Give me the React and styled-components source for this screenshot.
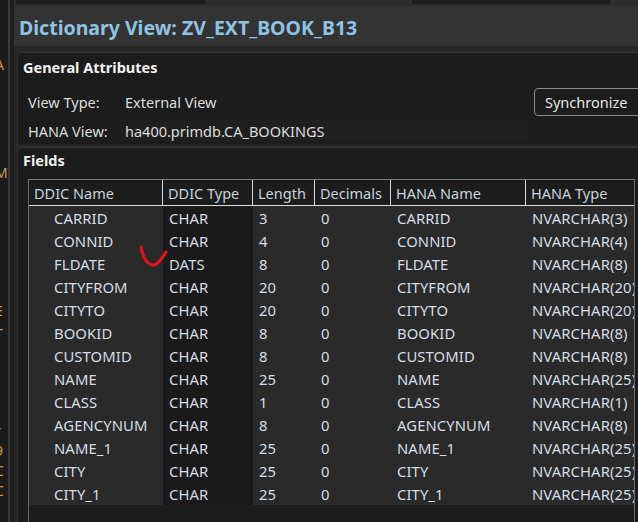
import React from 'react';
import styled, { createGlobalStyle } from 'styled-components';

const GlobalStyle = createGlobalStyle`
  html, body {
    margin: 0;
    padding: 0;
    background: #1e1e1e;
    font-family: "Noto Sans", "Open Sans", sans-serif;
  }
`;

const Page = styled.div`
  display: flex;
  width: 638px;
  height: 522px;
  overflow: hidden;
  background: #1e1e1e;
`;

const Sidebar = styled.div`
  width: 8px;
  flex: none;
  position: relative;
  overflow: hidden;
  background: #1b1b1b;
  border-right: 2px solid #3a3a3a;
  margin-right: 4px;
`;

const SideGlyph = styled.span`
  position: absolute;
  left: -5px;
  top: ${p => p.top}px;
  font-size: 14px;
  color: #c89a4a;
  line-height: 1;
`;

const Main = styled.div`
  flex: 1;
  display: flex;
  flex-direction: column;
  min-width: 0;
  background: #262626;
`;

const TopStrip = styled.div`
  height: 6px;
  display: flex;
  background: #2d2d2d;
`;

const TopTab = styled.div`
  width: ${p => p.w}px;
  margin-left: ${p => p.ml}px;
  background: #1e1e1e;
  height: 4px;
`;

const TitleBar = styled.div`
  height: 40px;
  display: flex;
  align-items: center;
  padding: 2px 0 0 5px;
  box-sizing: border-box;
  background: #333333;
  color: #8ec3e2;
  font-weight: 700;
  font-size: 19.5px;
  white-space: nowrap;
`;

const Divider = styled.div`
  height: 6px;
  background: #282828;
`;

const Section = styled.div`
  margin-left: 3px;
  background: #1c1c1c;
  border-top: 1px solid #353535;
  border-left: 1px solid #303030;
  border-top-left-radius: 5px;
  display: flex;
  flex-direction: column;
  ${p => p.grow && 'flex: 1;'}
`;

const SectionHeader = styled.div`
  height: ${p => p.h}px;
  display: flex;
  align-items: center;
  padding-left: 5px;
  font-weight: 700;
  font-size: 14.5px;
  color: #f2f2f2;
`;

const AttrList = styled.div`
  padding-top: 6px;
`;

const AttrRow = styled.div`
  height: 29px;
  display: flex;
  align-items: center;
  padding-left: 10px;
  font-size: 14.5px;
  color: #dcdcdc;
`;

const AttrLabel = styled.div`
  width: 97px;
  flex: none;
`;

const AttrValue = styled.div`
  flex: 1;
  display: flex;
  align-items: center;
  height: 21px;
  margin-left: -5px;
  padding-left: 5px;
  max-width: 402px;
  background: ${p => (p.field ? '#1f1f1f' : 'transparent')};
`;

const SyncButton = styled.button`
  margin-left: auto;
  height: 28px;
  width: 108px;
  flex: none;
  margin-right: -4px;
  background: #1c1c1c;
  border: 1px solid #8a8a8a;
  border-radius: 4px;
  color: #e6e6e6;
  font-family: inherit;
  font-size: 14.5px;
  padding: 0 0 0 10px;
  text-align: left;
`;

const SectionGap = styled.div`
  height: 2px;
  background: #2a2a2a;
`;

const TableWrap = styled.div`
  position: relative;
  flex: 1;
  margin: 7px 0 0 10px;
  width: 605px;
  border-left: 1px solid #6a6a6a;
  border-right: 1px solid #6a6a6a;
  border-top: 1px solid #7a7a7a;
  background: #1c1c1c;
`;

const Grid = styled.div`
  display: grid;
  grid-template-columns: 134px 90px 62px 76px 135px 108px;
  font-size: 14.8px;
  letter-spacing: 0.1px;
  color: #d6dde4;
`;

const HeadCell = styled.div`
  height: 25px;
  display: flex;
  align-items: center;
  padding-left: 5px;
  background: #1c1c1c;
  border-right: ${p => (p.last ? 'none' : '1px solid #d8d8d8')};
  border-bottom: 1px solid #e0e0e0;
  white-space: nowrap;
  overflow: hidden;
  font-size: 14.5px;
  letter-spacing: 0;
  color: #c9d3dc;
`;

const Cell = styled.div`
  height: 23px;
  display: flex;
  align-items: center;
  padding-left: ${p => (p.indent ? 25 : 6)}px;
  background: ${p => (p.dark ? '#1a1a1a' : '#2a2a2a')};
  white-space: nowrap;
  overflow: hidden;
`;

const Mark = styled.svg`
  position: absolute;
  left: 110px;
  top: 64px;
  pointer-events: none;
`;

const rows = [
  ['CARRID', 'CHAR', '3', 'NVARCHAR(3)'],
  ['CONNID', 'CHAR', '4', 'NVARCHAR(4)'],
  ['FLDATE', 'DATS', '8', 'NVARCHAR(8)'],
  ['CITYFROM', 'CHAR', '20', 'NVARCHAR(20)'],
  ['CITYTO', 'CHAR', '20', 'NVARCHAR(20)'],
  ['BOOKID', 'CHAR', '8', 'NVARCHAR(8)'],
  ['CUSTOMID', 'CHAR', '8', 'NVARCHAR(8)'],
  ['NAME', 'CHAR', '25', 'NVARCHAR(25)'],
  ['CLASS', 'CHAR', '1', 'NVARCHAR(1)'],
  ['AGENCYNUM', 'CHAR', '8', 'NVARCHAR(8)'],
  ['NAME_1', 'CHAR', '25', 'NVARCHAR(25)'],
  ['CITY', 'CHAR', '25', 'NVARCHAR(25)'],
  ['CITY_1', 'CHAR', '25', 'NVARCHAR(25)'],
];

const headers = ['DDIC Name', 'DDIC Type', 'Length', 'Decimals', 'HANA Name', 'HANA Type'];

const sideGlyphs = [
  { top: 58, c: 'A' },
  { top: 166, c: 'M' },
  { top: 304, c: 'E' },
  { top: 327, c: 'T' },
  { top: 424, c: 'r' },
  { top: 444, c: '9' },
  { top: 464, c: 'C' },
  { top: 484, c: 'C' },
];

export default function App() {
  return (
    <>
      <GlobalStyle />
      <Page>
        <Sidebar>
          {sideGlyphs.map(g => (
            <SideGlyph key={g.top} top={g.top}>{g.c}</SideGlyph>
          ))}
        </Sidebar>
        <Main>
          <TopStrip>
            <TopTab w={190} ml={2} />
            <TopTab w={198} ml={206} />
          </TopStrip>
          <TitleBar>Dictionary View: ZV_EXT_BOOK_B13</TitleBar>
          <Divider />
          <Section>
            <SectionHeader h={28}>General Attributes</SectionHeader>
            <AttrList>
              <AttrRow>
                <AttrLabel>View Type:</AttrLabel>
                <AttrValue>External View</AttrValue>
                <SyncButton>Synchronize</SyncButton>
              </AttrRow>
              <AttrRow>
                <AttrLabel>HANA View:</AttrLabel>
                <AttrValue field>ha400.primdb.CA_BOOKINGS</AttrValue>
              </AttrRow>
            </AttrList>
          </Section>
          <SectionGap />
          <Section grow>
            <SectionHeader h={24}>Fields</SectionHeader>
            <TableWrap>
              <Grid>
                {headers.map((h, i) => (
                  <HeadCell key={h} last={i === headers.length - 1}>{h}</HeadCell>
                ))}
                {rows.map(r => (
                  <React.Fragment key={r[0]}>
                    <Cell indent>{r[0]}</Cell>
                    <Cell dark>{r[1]}</Cell>
                    <Cell>{r[2]}</Cell>
                    <Cell>0</Cell>
                    <Cell>{r[0]}</Cell>
                    <Cell>{r[3]}</Cell>
                  </React.Fragment>
                ))}
              </Grid>
              <Mark width="30" height="26" viewBox="0 0 30 26">
                <path
                  d="M2 3 Q5 19 13 21 Q19 22 27 8"
                  fill="none"
                  stroke="#e0141a"
                  strokeWidth="3.2"
                  strokeLinecap="round"
                />
              </Mark>
            </TableWrap>
          </Section>
        </Main>
      </Page>
    </>
  );
}
